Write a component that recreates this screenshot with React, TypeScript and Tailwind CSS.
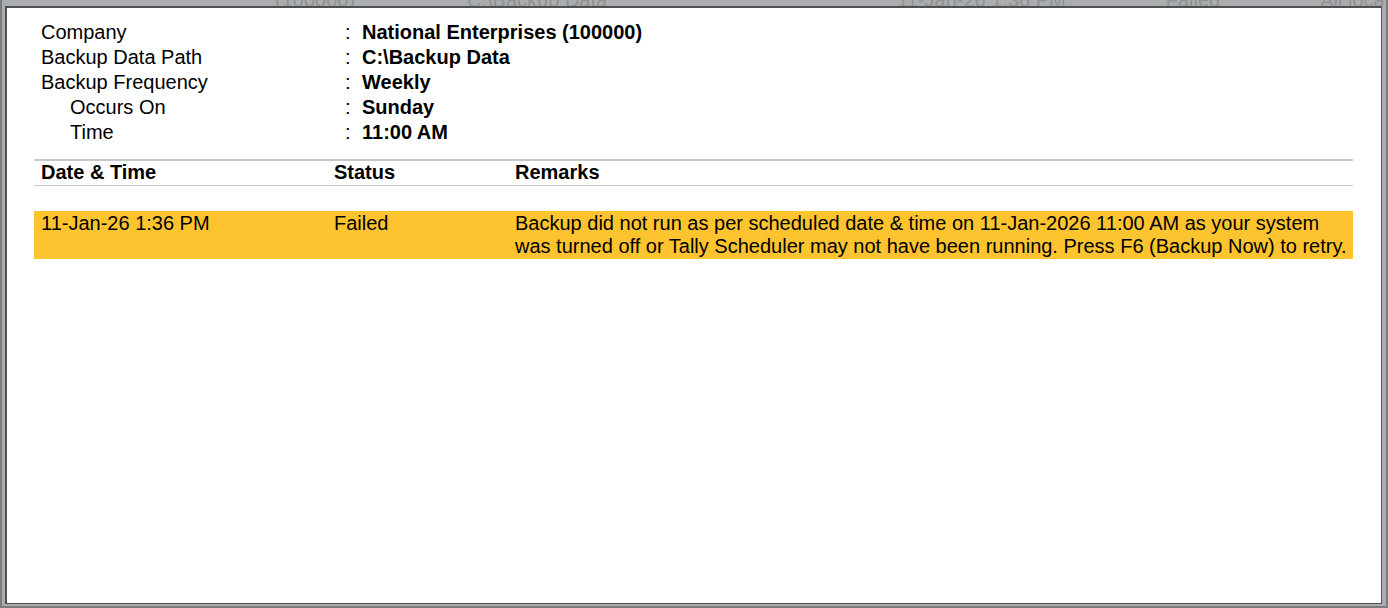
import React from "react";

const font = { fontFamily: '"Liberation Sans", Arial, sans-serif' };

function InfoRow({ label, value, indent }: { label: string; value: string; indent?: boolean }) {
  return (
    <div className="flex h-[25px] items-center">
      <div className={`w-[304px] ${indent ? "pl-[29px]" : ""}`}>{label}</div>
      <div className="w-[17px]">:</div>
      <div className="font-bold">{value}</div>
    </div>
  );
}

export default function App() {
  return (
    <div
      className="w-[1388px] h-[608px] bg-[#a9adb0] flex flex-col text-[20px] text-black border-l-2 border-r-2 border-b-2 border-[#7c7c7c]"
      style={font}
    >
      <div className="h-[6px] overflow-hidden relative text-[#929292] text-[20px]">
        <div className="flex -mt-[15px] whitespace-nowrap">
          <span className="ml-[273px]">(100000)</span>
          <span className="ml-[112px]">C:\Backup Data</span>
          <span className="ml-[290px]">11-Jan-26 1:36 PM</span>
          <span className="ml-[100px]">Failed</span>
          <span className="ml-[100px]">All loca</span>
        </div>
      </div>
      <div className="flex-1 ml-[3px] mr-[4px] mb-[2px] bg-white border border-[#505050] border-t-2 border-l-2 flex flex-col pl-[27px] pr-[28px] pt-[11px]">
        <div className="pl-[7px]">
          <InfoRow label="Company" value="National Enterprises (100000)" />
          <InfoRow label="Backup Data Path" value="C:\Backup Data" />
          <InfoRow label="Backup Frequency" value="Weekly" />
          <InfoRow label="Occurs On" value="Sunday" indent />
          <InfoRow label="Time" value="11:00 AM" indent />
        </div>
        <div className="mt-[15px] border-t-2 border-[#c8c8c8] border-b border-b-[#c8c8c8] h-[27px] flex items-center font-bold pl-[7px] pb-[2px]">
          <div className="w-[293px]">Date &amp; Time</div>
          <div className="w-[181px]">Status</div>
          <div>Remarks</div>
        </div>
        <div className="mt-[25px] bg-[#fec42f] flex pl-[7px] pt-[1px] pb-[1px] leading-[23px]">
          <div className="w-[293px]">11-Jan-26 1:36 PM</div>
          <div className="w-[181px]">Failed</div>
          <div className="flex-1 whitespace-nowrap">
            Backup did not run as per scheduled date &amp; time on 11-Jan-2026 11:00 AM as your system
            <br />
            was turned off or Tally Scheduler may not have been running. Press F6 (Backup Now) to retry.
          </div>
        </div>
      </div>
    </div>
  );
}
